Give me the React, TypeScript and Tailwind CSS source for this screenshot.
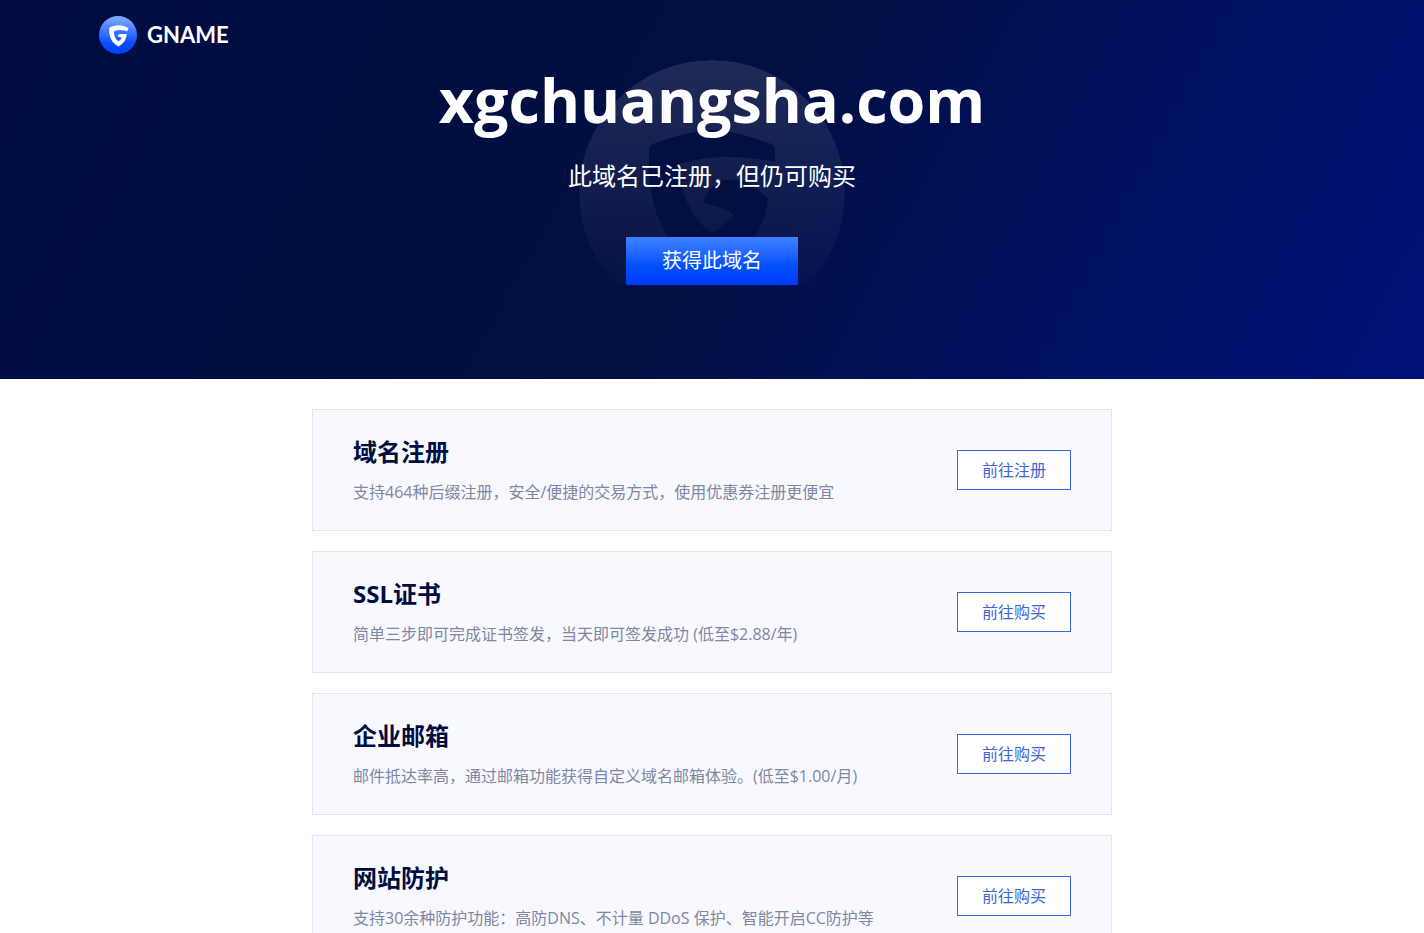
type Service = {
  title: string;
  description: string;
  action: string;
};

const services: Service[] = [
  {
    title: "域名注册",
    description: "支持464种后缀注册，安全/便捷的交易方式，使用优惠券注册更便宜",
    action: "前往注册",
  },
  {
    title: "SSL证书",
    description: "简单三步即可完成证书签发，当天即可签发成功 (低至$2.88/年)",
    action: "前往购买",
  },
  {
    title: "企业邮箱",
    description: "邮件抵达率高，通过邮箱功能获得自定义域名邮箱体验。(低至$1.00/月)",
    action: "前往购买",
  },
  {
    title: "网站防护",
    description: "支持30余种防护功能：高防DNS、不计量 DDoS 保护、智能开启CC防护等",
    action: "前往购买",
  },
];

const shieldPath =
  "M133 70C111 71 90 78 74 84Q70 86 70 90V106C70 150 86 188 133 223C170 194 187 166 189 138C179 130 171 123 162 120H144C134 125 126 133 124 143C136 146 148 149 155 155C149 162 142 168 133 173C111 158 101 132 101 104C128 95 163 95 196 102V90Q196 86 192 84C176 78 155 71 133 70Z";

function Logo() {
  return (
    <a href="#" className="flex items-center gap-[10px]">
      <svg width="38" height="38" viewBox="0 0 266 266" aria-hidden="true">
        <defs>
          <linearGradient id="logo-fill" x1="0" y1="0" x2="0" y2="1">
            <stop offset="0" stopColor="#85adff" />
            <stop offset="0.7" stopColor="#0a50ff" />
            <stop offset="1" stopColor="#0040ff" />
          </linearGradient>
        </defs>
        <circle cx="133" cy="133" r="133" fill="url(#logo-fill)" />
        <path
          d="M137 64C113 65 91 72 72 82V106C72 150 90 186 137 213C172 194 192 164 194 126H150C140 128 133 134 128 143C142 145 152 148 160 153C154 164 146 171 136 176C115 162 104 138 104 108C130 96 166 96 198 106L206 84C185 72 162 65 137 64Z"
          fill="#fff"
        />
      </svg>
      <span className="font-[Lato] text-[22px] leading-7 font-bold">GNAME</span>
    </a>
  );
}

function Emblem() {
  return (
    <svg
      className="absolute inset-x-0 top-0 mx-auto"
      width="266"
      height="225"
      viewBox="0 0 266 225"
      aria-hidden="true"
    >
      <defs>
        <linearGradient id="emblem-fill" x1="0" y1="0" x2="0" y2="1">
          <stop offset="0" stopColor="#fff" stopOpacity="0.12" />
          <stop offset="0.9" stopColor="#fff" stopOpacity="0.01" />
        </linearGradient>
        <mask id="emblem-mask">
          <circle cx="133" cy="133" r="133" fill="#fff" />
          <path d={shieldPath} fill="#000" />
        </mask>
      </defs>
      <circle cx="133" cy="133" r="133" fill="url(#emblem-fill)" mask="url(#emblem-mask)" />
    </svg>
  );
}

function ServiceCard({ title, description, action }: Service) {
  return (
    <li className="flex items-center justify-between gap-6 border border-[#e1e5ee] bg-[#f8f9ff] px-10 py-[22px]">
      <div className="flex flex-col gap-1">
        <h2 className="text-2xl leading-10 font-bold text-[#000d40]">{title}</h2>
        <p className="text-base leading-8 text-[#8087a0]">{description}</p>
      </div>
      <a
        href="#"
        className="shrink-0 border border-[#3c66d6] bg-white px-6 text-base leading-[38px] text-[#3c66d6]"
      >
        {action}
      </a>
    </li>
  );
}

export default function App() {
  return (
    <div className="min-h-screen bg-white font-['Open_Sans','Noto_Sans_CJK_SC',sans-serif]">
      <header className="bg-[linear-gradient(118deg,#000c42_0%,#020f41_50%,#00105c_72%,#001078_100%)] pb-[94px] text-white">
        <div className="mx-auto flex h-[60px] max-w-[1226px] items-end pb-[6px]">
          <Logo />
        </div>
        <div className="relative">
          <Emblem />
          <div className="relative flex flex-col items-center">
            <h1 className="text-[61px] leading-20 font-bold">xgchuangsha.com</h1>
            <p className="pt-4 text-2xl leading-10">此域名已注册，但仍可购买</p>
            <button
              type="button"
              className="mt-[41px] h-12 w-[172px] bg-linear-to-b from-[#4080ff] via-[#0050ff] via-60% to-[#0038ff] text-xl"
            >
              获得此域名
            </button>
          </div>
        </div>
      </header>
      <main className="mx-auto max-w-[800px] py-[30px]">
        <ul className="flex flex-col gap-5">
          {services.map((service) => (
            <ServiceCard key={service.title} {...service} />
          ))}
        </ul>
      </main>
    </div>
  );
}
